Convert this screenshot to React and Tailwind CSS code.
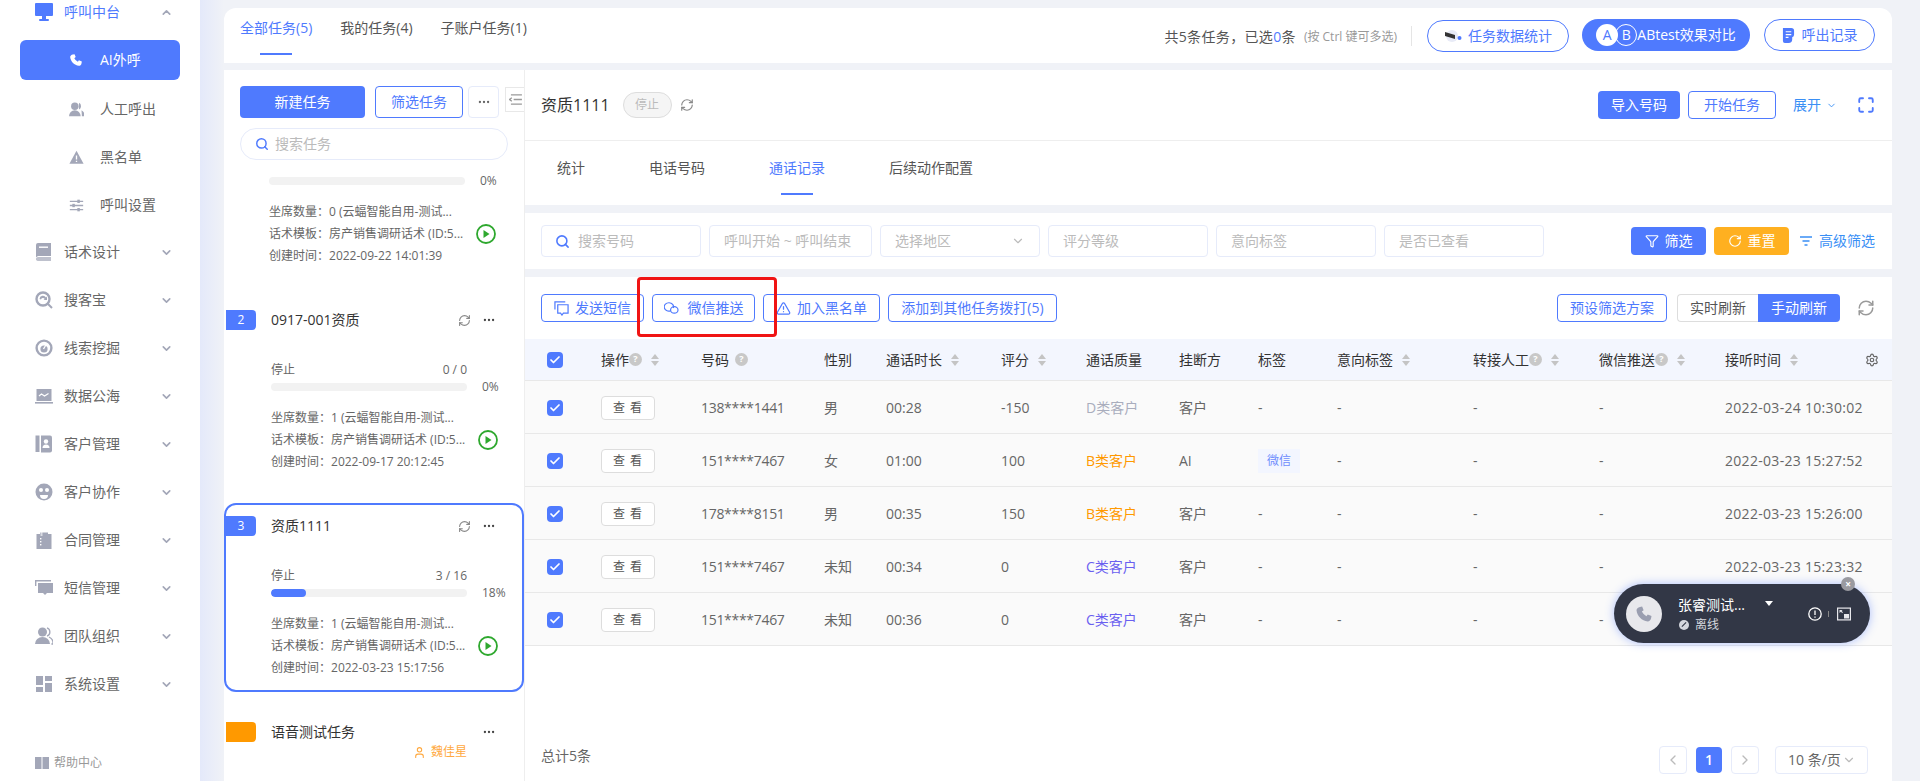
import { ChevronDown, ChevronUp, ChevronLeft, ChevronRight, Search, RefreshCw, Settings, TriangleAlert, Filter, RotateCw, User, Check, Maximize, Ellipsis } from "lucide-react";

const Svg = ({ children, className = "w-[18px] h-[18px]" }) => (
  <svg viewBox="0 0 18 18" fill="currentColor" className={className}>
    {children}
  </svg>
);

const navIcons = {
  book: (
    <Svg>
      <path d="M1 2a2 2 0 0 1 2-2h13v13H4a3 3 0 0 0-3 1.500z" />
      <path d="M1 15.500A2 2 0 0 1 3 14h13v4H3a2 2 0 0 1-2-2.500z" opacity=".7" />
      <rect x="4" y="3.500" width="9" height="1.400" fill="#fff" />
    </Svg>
  ),
  search: (
    <Svg>
      <circle cx="8" cy="8" r="6.500" fill="none" stroke="currentColor" strokeWidth="2.400" />
      <path d="M13 13l4 4" stroke="currentColor" strokeWidth="2" />
      <path d="M4.500 8a3.500 3.500 0 0 1 6.500-1.500l1-1v3.500H8.500l1.200-1.100A2 2 0 0 0 6 8.500z" />
    </Svg>
  ),
  target: (
    <Svg>
      <circle cx="9" cy="9" r="7.400" fill="none" stroke="currentColor" strokeWidth="2.400" />
      <circle cx="9" cy="10" r="3.600" />
      <path d="M8.500 10l3-5" stroke="#fff" strokeWidth="1.300" />
    </Svg>
  ),
  sea: (
    <Svg>
      <rect x="1.500" y="2" width="15" height="12" />
      <rect y="15" width="18" height="1.600" />
      <path d="M4 9l2.500-2 3 2 4-2.500" fill="none" stroke="#fff" strokeWidth="1.200" />
    </Svg>
  ),
  contacts: (
    <Svg>
      <rect x="0.500" y="0.500" width="4" height="16.500" />
      <path d="M6 .5h9a2 2 0 0 1 2 2v13a2 2 0 0 1-2 2H6z" />
      <circle cx="11" cy="6.500" r="2.200" fill="#fff" />
      <path d="M7.500 13a3.500 3.500 0 0 1 7 0z" fill="#fff" />
    </Svg>
  ),
  face: (
    <Svg>
      <circle cx="9" cy="9" r="8.500" />
      <circle cx="6" cy="7" r="2" fill="#fff" />
      <circle cx="12" cy="7" r="2" fill="#fff" />
      <path d="M5 12h8a4 4 0 0 1-8 0z" fill="#fff" />
    </Svg>
  ),
  clip: (
    <Svg>
      <path d="M1.500 3H5V1.500h8V3h3.500v15h-15z" />
      <rect x="5.500" y="0" width="2" height="5" fill="#fff" opacity=".6" />
      <rect x="5" y="7" width="1.400" height="1.400" fill="#fff" />
      <rect x="5" y="10" width="1.400" height="1.400" fill="#fff" />
      <rect x="5" y="13" width="1.400" height="1.400" fill="#fff" />
    </Svg>
  ),
  sms: (
    <Svg>
      <path d="M0 1h16v1.400H1.400V7H0z" />
      <path d="M3 4h15v10h-6l-2 2-2-2H3z" />
    </Svg>
  ),
  team: (
    <Svg>
      <circle cx="7.500" cy="5" r="4.500" />
      <path d="M0 17a7.500 7 0 0 1 15 0z" />
      <path d="M12 .8a4.500 4.500 0 0 1 0 8.400M14 10a7 7 0 0 1 4 7h-1.600" fill="none" stroke="currentColor" strokeWidth="1.300" />
    </Svg>
  ),
  grid: (
    <Svg>
      <rect x="1" y="1" width="7" height="9" />
      <rect x="10" y="1" width="7" height="5" />
      <rect x="10" y="8" width="7" height="9" />
      <rect x="1" y="12" width="7" height="5" />
    </Svg>
  ),
};

const navItems = [
  ["话术设计", "book"],
  ["搜客宝", "search"],
  ["线索挖掘", "target"],
  ["数据公海", "sea"],
  ["客户管理", "contacts"],
  ["客户协作", "face"],
  ["合同管理", "clip"],
  ["短信管理", "sms"],
  ["团队组织", "team"],
  ["系统设置", "grid"],
];

const subItems = [
  [
    "人工呼出",
    <Svg key="a" className="w-[15px] h-[15px]">
      <circle cx="7" cy="5" r="4.500" />
      <path d="M0 17a7 7 0 0 1 14 0z" />
      <path d="M12 1a4.500 4.500 0 0 1 0 8M15 10a6 6 0 0 1 3 7h-2.500" />
    </Svg>,
  ],
  [
    "黑名单",
    <Svg key="b" className="w-[15px] h-[15px]">
      <path d="M9 1l8.500 15.500H.5z" />
      <path d="M9 6.500v5M9 12.800v1.500" stroke="#fff" strokeWidth="1.600" />
    </Svg>,
  ],
  [
    "呼叫设置",
    <Svg key="c" className="w-[15px] h-[15px]">
      <path d="M1 4h16M1 9h16M1 14h16" stroke="currentColor" strokeWidth="1.600" />
      <rect x="10" y="2" width="3" height="4" />
      <rect x="4" y="7" width="3" height="4" />
      <rect x="10" y="12" width="3" height="4" />
    </Svg>,
  ],
];

const Sidebar = () => (
  <div className="w-[224px] shrink-0 flex">
    <div className="w-[200px] bg-white flex flex-col text-sm text-[#666]">
      <div className="h-6 flex items-center pl-[35px] text-[#4f7afe]">
        <svg viewBox="0 0 18 18" fill="currentColor" className="w-[18px] h-[18px]">
          <rect y="0" width="18" height="13" rx="1" />
          <rect x="7" y="13" width="4" height="3" />
          <rect x="4" y="16" width="10" height="2" rx="1" />
        </svg>
        <span className="ml-[11px]">呼叫中台</span>
        <ChevronUp className="w-[13px] h-[13px] ml-[40px] text-[#a3a7b8]" strokeWidth={3} />
      </div>
      <div className="mt-4 mx-5 h-10 rounded-md bg-[#4f7afe] text-white flex items-center pl-[49px]">
        <svg viewBox="0 0 24 24" fill="currentColor" className="w-[14px] h-[14px]">
          <path d="M6.600 2.500 9.500 2l2 5-2.400 1.800a13 13 0 0 0 6.100 6.100l1.800-2.400 5 2-.5 2.900C21 20.500 19 22 17 22 9 21 3 15 2 7c0-2 2-4 4.600-4.500z" />
        </svg>
        <span className="ml-[17px]">AI外呼</span>
      </div>
      <div className="mt-[5px] h-[143px] flex flex-col">
        {subItems.map(([label, icon]) => (
          <div key={label} className="h-12 shrink-0 flex items-center pl-[69px]">
            <span className="w-[15px] flex text-[#a3a7b8]">{icon}</span>
            <span className="ml-[16px]">{label}</span>
          </div>
        ))}
      </div>
      {navItems.map(([label, icon]) => (
        <div key={label} className="h-12 shrink-0 flex items-center pl-[35px]">
          <span className="w-[18px] flex text-[#a3a7b8]">{navIcons[icon]}</span>
          <span className="ml-[11px] w-[56px] whitespace-nowrap">{label}</span>
          <ChevronDown className="w-[13px] h-[13px] ml-[40px] text-[#a3a7b8]" strokeWidth={3} />
        </div>
      ))}
      <div className="mt-auto mb-2 h-5 flex items-center pl-[35px] text-xs text-[#999]">
        <svg viewBox="0 0 14 14" fill="#a3a7b8" className="w-[14px] h-[14px]">
          <path d="M0 1h6.500v12H0zM7.500 1H14v12H7.500z" />
        </svg>
        <span className="ml-[5px]">帮助中心</span>
      </div>
    </div>
    <div className="w-6 bg-gradient-to-r from-[#e4e9fa] to-[#f0f2f7]" />
  </div>
);

const TopTab = ({ label, active }) => (
  <div className={`flex flex-col items-center pt-[10px] ${active ? "text-[#4f7afe]" : "text-[#555]"}`}>
    <span className="leading-5 text-sm whitespace-nowrap">{label}</span>
    {active && <span className="mt-[15px] w-8 h-[2px] bg-[#4f7afe]" />}
  </div>
);

const TopBar = () => (
  <div className="h-[55px] shrink-0 mb-[7px] bg-white rounded-t-xl flex pl-4 pr-[17px]">
    <div className="flex gap-7">
      <TopTab label="全部任务(5)" active />
      <TopTab label="我的任务(4)" />
      <TopTab label="子账户任务(1)" />
    </div>
    <div className="ml-auto flex items-start pt-[11px]">
      <div className="h-8 mt-[2px] flex items-center text-sm text-[#555] whitespace-nowrap">
        <span className="tracking-[0.35px]">
          共5条任务，已选<span className="text-[#4f7afe]">0</span>条
        </span>
        <span className="ml-2 text-xs text-[#999]">(按 Ctrl 键可多选)</span>
      </div>
      <span className="ml-[14px] mt-[7px] h-[20px] w-px bg-[#e5e5e5]" />
      <button className="ml-[15px] mt-px h-8 w-[142px] rounded-full border border-[#4f7afe] flex items-center justify-center text-sm text-[#4f7afe]">
        <svg viewBox="0 0 18 12" className="w-[18px] h-[12px] mr-[6px]">
          <circle cx="8" cy="6" r="6" fill="#e8ebf7" />
          <path d="M1 2l10 3v4L1 6z" fill="#333" />
          <circle cx="15.500" cy="8" r="2" fill="#4f7afe" />
        </svg>
        任务数据统计
      </button>
      <button className="ml-[13px] h-8 w-[168px] rounded-full bg-[#4f7afe] flex items-center justify-center text-sm text-white">
        <span className="w-[22px] h-[22px] rounded-full bg-white text-[#4f7afe] flex items-center justify-center">A</span>
        <span className="w-[22px] h-[22px] -ml-[3px] rounded-full border border-white flex items-center justify-center">B</span>
        <span className="whitespace-nowrap">ABtest效果对比</span>
      </button>
      <button className="ml-[14px] h-8 w-[111px] rounded-full border border-[#4f7afe] flex items-center justify-center text-sm text-[#4f7afe]">
        <svg viewBox="0 0 14 16" fill="currentColor" className="w-[13px] h-[15px] mr-[7px]">
          <path d="M1 0h9a3 3 0 0 1 3 3v4a3 3 0 0 1-2 3v2a4 4 0 0 1-4 4H3a2 2 0 0 1-2-2z" />
          <path d="M4 4h6M4 7h6M4 10h3" stroke="#fff" strokeWidth="1.200" />
        </svg>
        呼出记录
      </button>
    </div>
  </div>
);

const PlayIcon = () => (
  <svg viewBox="0 0 20 20" className="w-5 h-5 shrink-0 ml-[10px]">
    <circle cx="10" cy="10" r="9" fill="none" stroke="#2ea82e" strokeWidth="1.800" />
    <path d="M7.500 6l6 4-6 4z" fill="#2ea82e" />
  </svg>
);

const InfoLines = ({ seats, date }) => (
  <div className="mt-4 flex items-center pl-[45px]">
    <div className="w-[197px] text-xs leading-[22px] text-[#666] whitespace-nowrap">
      <div>坐席数量：{seats} (云蝠智能自用-测试...</div>
      <div>话术模板：房产销售调研话术 (ID:5...</div>
      <div>创建时间：{date}</div>
    </div>
    <PlayIcon />
  </div>
);

const Bar = ({ percent, pct }) => (
  <div className="h-2 flex items-center pl-[45px] text-xs text-[#666]">
    <div className="w-[196px] h-2 rounded-full bg-[#f2f2f2] overflow-hidden">
      <div className="h-full rounded-full bg-[#4f7afe]" style={{ width: `${percent}%` }} />
    </div>
    <span className="ml-[15px]">{pct}</span>
  </div>
);

const TaskCard = ({ num, title, count, pct, percent, seats, date, active, height }) => (
  <div className={`border-2 pt-[11px] rounded-xl ${active ? "border-[#4f7afe]" : "border-transparent"} ${height}`}>
    <div className="flex items-center h-5 pr-[26px]">
      <span className="w-[30px] h-5 rounded-r-sm bg-[#4f7afe] text-white text-xs flex items-center justify-center">{num}</span>
      <span className="ml-[15px] text-sm text-[#333]">{title}</span>
      <RefreshCw className="ml-auto w-[13px] h-[13px] text-[#888]" />
      <Ellipsis className="ml-[11px] w-[14px] h-[14px] text-[#444]" />
    </div>
    <div className="mt-[30px] h-5 w-[241px] pl-[45px] flex items-center justify-between text-xs text-[#666]">
      <span>停止</span>
      <span>{count}</span>
    </div>
    <div className="mt-[3px]">
      <Bar percent={percent} pct={pct} />
    </div>
    <InfoLines seats={seats} date={date} />
  </div>
);

const LeftPanel = () => (
  <div className="w-[300px] shrink-0 bg-white overflow-hidden">
    <div className="relative pt-4 pl-4 pr-4">
      <div className="flex h-8">
        <button className="w-[125px] rounded bg-[#4f7afe] text-white text-sm">新建任务</button>
        <button className="ml-[10px] w-[88px] rounded border border-[#4f7afe] text-[#4f7afe] text-sm">筛选任务</button>
        <button className="ml-[5px] w-[31px] rounded border border-[#e6ebfa] flex items-center justify-center text-[#666]">
          <Ellipsis className="w-[14px] h-[14px]" />
        </button>
      </div>
      <span className="absolute right-0 top-[17px] w-[19px] h-[25px] border border-r-0 border-[#e8e8e8] bg-white flex items-center justify-center">
        <svg viewBox="0 0 14 12" className="w-[13px] h-[11px]" fill="none" stroke="#999" strokeWidth="1.400">
          <path d="M2 1h12M5 6h9M2 11h12" />
          <path d="M3 4L0.500 6 3 8" />
        </svg>
      </span>
      <div className="mt-[10px] w-[268px] h-8 rounded-full border border-[#e6ebfa] flex items-center pl-[14px] text-sm text-[#bbb]">
        <Search className="w-[14px] h-[14px] text-[#4f7afe]" strokeWidth={2.5} />
        <span className="ml-[6px]">搜索任务</span>
      </div>
    </div>
    <div className="h-[137px] pt-[17px]">
      <Bar percent={0} pct="0%" />
      <InfoLines seats={0} date="2022-09-22 14:01:39" />
    </div>
    <div className="mb-[18px]">
      <TaskCard num={2} title="0917-001资质" count="0 / 0" pct="0%" percent={0} seats={1} date="2022-09-17 20:12:45" height="h-[188px]" />
    </div>
    <TaskCard num={3} title="资质1111" count="3 / 16" pct="18%" percent={18} seats={1} date="2022-03-23 15:17:56" active height="h-[189px]" />
    <div className="pt-[30px] pl-[2px]">
      <div className="flex items-center h-5 pr-[28px]">
        <span className="w-[30px] h-5 rounded-r-sm bg-[#ff9900]" />
        <span className="ml-[15px] text-sm text-[#333]">语音测试任务</span>
        <Ellipsis className="ml-auto w-[14px] h-[14px] text-[#444]" />
      </div>
      <div className="mt-[2px] pl-[187px] flex items-center text-xs text-[#ffa940]">
        <User className="w-[13px] h-[13px]" />
        <span className="ml-[5px]">魏佳星</span>
      </div>
    </div>
  </div>
);

const Field = ({ label, width = "w-[160px]", icon, chevron }) => (
  <div className={`${width} h-8 rounded border border-[#e6ebfa] flex items-center px-[14px] text-sm text-[#bbb] whitespace-nowrap`}>
    {icon}
    <span>{label}</span>
    {chevron && <ChevronDown className="ml-auto w-[14px] h-[14px] text-[#bbb]" />}
  </div>
);

const rowGrid =
  "grid grid-cols-[54px_100px_123px_62px_115px_85px_93px_79px_79px_136px_126px_126px_1fr] items-center pl-[22px]";

const Sort = () => (
  <span className="inline-flex flex-col gap-[2px] ml-[9px] align-middle">
    <span className="w-0 h-0 border-x-[4px] border-x-transparent border-b-[5px] border-b-[#c4c4c4]" />
    <span className="w-0 h-0 border-x-[4px] border-x-transparent border-t-[5px] border-t-[#c4c4c4]" />
  </span>
);

const Help = ({ className = "" }) => (
  <span className={`w-[13px] h-[13px] rounded-full bg-[#c8c8c8] text-white text-[9px] font-bold inline-flex items-center justify-center ${className}`}>?</span>
);

const Box = () => (
  <span className="w-4 h-4 rounded-sm bg-[#4f7afe] flex items-center justify-center">
    <Check className="w-3 h-3 text-white" strokeWidth={3.5} />
  </span>
);

const headers = [
  { label: "操作", help: true, sort: true },
  { label: "号码", help: true, gap: true },
  { label: "性别" },
  { label: "通话时长", sort: true },
  { label: "评分", sort: true },
  { label: "通话质量" },
  { label: "挂断方" },
  { label: "标签" },
  { label: "意向标签", sort: true },
  { label: "转接人工", help: true, sort: true },
  { label: "微信推送", help: true, sort: true },
  { label: "接听时间", sort: true },
];

const rows = [
  ["138****1441", "男", "00:28", "-150", "D类客户", "text-[#a9adbd]", "客户", false, "2022-03-24 10:30:02"],
  ["151****7467", "女", "01:00", "100", "B类客户", "text-[#ff9900]", "AI", true, "2022-03-23 15:27:52"],
  ["178****8151", "男", "00:35", "150", "B类客户", "text-[#ff9900]", "客户", false, "2022-03-23 15:26:00"],
  ["151****7467", "未知", "00:34", "0", "C类客户", "text-[#6a5ff0]", "客户", false, "2022-03-23 15:23:32"],
  ["151****7467", "未知", "00:36", "0", "C类客户", "text-[#6a5ff0]", "客户", false, ""],
];

const OutlineBtn = ({ width, icon, children }) => (
  <button className={`${width} h-7 rounded border border-[#4f7afe] flex items-center justify-center text-sm text-[#4f7afe] whitespace-nowrap`}>
    {icon}
    {children}
  </button>
);

const Table = () => (
  <div className="relative flex-1 bg-white flex flex-col">
    <div className="relative h-[62px] shrink-0 pt-[17px] pl-4 pr-[17px] flex items-start">
      <div className="flex gap-2">
        <OutlineBtn
          width="w-[103px]"
          icon={
            <svg viewBox="0 0 16 16" fill="none" stroke="currentColor" strokeWidth="1.300" className="w-[15px] h-[15px] mr-[6px]">
              <path d="M1 9V1h11" />
              <path d="M4 4h11v9H10l-1.500 2L7 13H4z" />
            </svg>
          }
        >
          发送短信
        </OutlineBtn>
        <OutlineBtn
          width="w-[103px]"
          icon={
            <svg viewBox="0 0 16 14" fill="none" stroke="currentColor" strokeWidth="1.300" className="w-[15px] h-[13px] mr-[9px]">
              <path d="M7 9.500a5 4.500 0 1 1 3-3" />
              <ellipse cx="11" cy="8.500" rx="4" ry="3.500" />
            </svg>
          }
        >
          微信推送
        </OutlineBtn>
        <OutlineBtn width="w-[117px]" icon={<TriangleAlert className="w-[15px] h-[15px] mr-[6px]" />}>
          加入黑名单
        </OutlineBtn>
        <OutlineBtn width="w-[169px]">添加到其他任务拨打(5)</OutlineBtn>
      </div>
      <div className="ml-auto flex items-center h-7">
        <OutlineBtn width="w-[110px]">预设筛选方案</OutlineBtn>
        <div className="ml-[10px] flex h-7 text-sm">
          <span className="w-[81px] rounded-l border border-r-0 border-[#ddd] text-[#555] flex items-center justify-center">实时刷新</span>
          <span className="w-[82px] rounded-r bg-[#4f7afe] text-white flex items-center justify-center">手动刷新</span>
        </div>
        <RefreshCw className="ml-[17px] w-[18px] h-[18px] text-[#9a9a9a]" />
      </div>
      <span className="absolute left-[112px] top-0 w-[140px] h-[60px] border-[3px] border-[#f01414] rounded-[4px]" />
    </div>

    <div className={`relative ${rowGrid} h-[42px] bg-[#f3f6fe] border-b border-[#e8e8e8] text-sm text-[#333]`}>
      <Box />
      {headers.map((h) => (
        <div key={h.label} className="flex items-center whitespace-nowrap">
          {h.label}
          {h.help && <Help className={h.gap ? "ml-[6px]" : ""} />}
          {h.sort && <Sort />}
        </div>
      ))}
      <Settings className="absolute right-[13px] top-[14px] w-[14px] h-[14px] text-[#666]" />
    </div>

    {rows.map((r, i) => (
      <div key={i} className={`${rowGrid} h-[53px] pt-px bg-[#fafafa] border-b border-[#e8e8e8] text-sm text-[#666]`}>
        <Box />
        <div>
          <button className="w-[54px] h-6 rounded-sm border border-[#ddd] bg-white text-xs tracking-[1px] text-[#555]">查 看</button>
        </div>
        <div className="tracking-[-0.3px]">{r[0]}</div>
        <div>{r[1]}</div>
        <div>{r[2]}</div>
        <div>{r[3]}</div>
        <div className={r[5]}>{r[4]}</div>
        <div>{r[6]}</div>
        <div>
          {r[7] ? (
            <span className="w-[42px] h-6 bg-[#f3f6ff] text-xs text-[#6f8dfd] flex items-center justify-center">微信</span>
          ) : (
            "-"
          )}
        </div>
        <div>-</div>
        <div>-</div>
        <div>-</div>
        <div className="tracking-[0.3px]">{r[8]}</div>
      </div>
    ))}

    <div className="flex-1 flex items-start pt-[100px] pl-4 pr-6">
      <span className="h-5 text-sm leading-5 text-[#666]">总计5条</span>
      <div className="ml-auto flex items-center text-[#bbb]">
        <span className="w-7 h-7 rounded border border-[#e6ebfa] flex items-center justify-center">
          <ChevronLeft className="w-4 h-4" />
        </span>
        <span className="ml-[9px] w-[26px] h-[26px] rounded bg-[#4f7afe] text-white text-sm font-semibold flex items-center justify-center">1</span>
        <span className="ml-[9px] w-7 h-7 rounded border border-[#e6ebfa] flex items-center justify-center">
          <ChevronRight className="w-4 h-4" />
        </span>
        <span className="ml-4 w-[93px] h-7 rounded border border-[#e6ebfa] flex items-center pl-3 text-sm text-[#666] whitespace-nowrap">
          10 条/页
          <ChevronDown className="ml-px w-[14px] h-[14px] text-[#bbb]" />
        </span>
      </div>
    </div>

    <div className="absolute left-[1089px] top-[307px] w-[256px] h-[59px] rounded-full bg-[#323746] shadow-[0_0_10px_rgba(79,122,254,0.45)] flex items-center pl-3 text-white">
      <span className="w-9 h-9 rounded-full bg-[#e8e8ec] flex items-center justify-center">
        <svg viewBox="0 0 24 24" fill="#9a9eb0" className="w-[18px] h-[18px]">
          <path d="M6.600 2.500 9.500 2l2 5-2.400 1.800a13 13 0 0 0 6.100 6.100l1.800-2.400 5 2-.5 2.900C21 20.500 19 22 17 22 9 21 3 15 2 7c0-2 2-4 4.600-4.500z" />
        </svg>
      </span>
      <div className="ml-[16px] w-[70px]">
        <div className="text-sm leading-5 whitespace-nowrap">张睿测试...</div>
        <div className="mt-[2px] flex items-center text-xs leading-4 text-[#d5d7de]">
          <span className="w-[10px] h-[10px] rounded-full bg-[#d5d7de] ml-[1px] mr-[6px] flex items-center justify-center">
            <span className="w-[6px] h-px bg-[#323746] -rotate-45" />
          </span>
          离线
        </div>
      </div>
      <span className="ml-[17px] -mt-[20px] w-0 h-0 border-x-[4px] border-x-transparent border-t-[5px] border-t-white" />
      <svg viewBox="0 0 14 14" fill="none" stroke="#fff" strokeWidth="1.300" className="ml-[35px] w-[14px] h-[14px]">
        <circle cx="7" cy="7" r="6.200" />
        <path d="M7 3.500v4.500M7 9.500v1.300" />
      </svg>
      <span className="ml-[6px] w-px h-[6px] bg-[#888]" />
      <svg viewBox="0 0 14 14" className="ml-[8px] w-[14px] h-[14px]">
        <rect x="0.600" y="1.100" width="12.800" height="11.800" fill="none" stroke="#e8e8ec" strokeWidth="1.200" />
        <rect x="7" y="7" width="5" height="4.500" fill="#e8e8ec" />
        <path d="M2.500 3h3L4.600 3.900 6 5.300l-.8.800-1.400-1.400-1.300 1.200z" fill="#e8e8ec" />
      </svg>
      <span className="absolute right-[15px] -top-[7px] w-[14px] h-[14px] rounded-full bg-[#9a9aa0] text-white text-[10px] font-bold flex items-center justify-center">×</span>
    </div>
  </div>
);

const Detail = () => (
  <div className="flex-1 min-w-0 border-l border-[#eee] flex flex-col">
    <div className="h-[71px] shrink-0 bg-white border-b border-[#eee] flex items-center pl-4 pr-[17px]">
      <span className="text-base text-[#333]">资质1111</span>
      <span className="ml-[13px] w-[49px] h-[26px] rounded-full border border-[#ddd] bg-[#f5f5f5] text-xs text-[#bbb] flex items-center justify-center">停止</span>
      <RefreshCw className="ml-[8px] w-[14px] h-[14px] text-[#888]" />
      <div className="ml-auto flex items-center">
        <button className="w-[82px] h-7 rounded-sm bg-[#4f7afe] text-white text-sm">导入号码</button>
        <button className="ml-2 w-[88px] h-7 rounded-sm border border-[#4f7afe] text-[#4f7afe] text-sm">开始任务</button>
        <span className="ml-[17px] text-sm text-[#3a8ff5]">展开</span>
        <ChevronDown className="ml-[5px] w-[11px] h-[11px] text-[#3a8ff5]" />
        <Maximize className="ml-[20px] w-[18px] h-[18px] text-[#4f7afe]" strokeWidth={2.5} />
      </div>
    </div>
    <div className="h-[64px] shrink-0 bg-white pl-8 flex gap-16 pt-[17px] text-sm text-[#555]">
      <span className="leading-5">统计</span>
      <span className="leading-5">电话号码</span>
      <div className="flex flex-col items-center text-[#4f7afe]">
        <span className="leading-5">通话记录</span>
        <span className="mt-[15px] w-8 h-[2px] bg-[#4f7afe]" />
      </div>
      <span className="leading-5">后续动作配置</span>
    </div>
    <div className="mt-2 h-[56px] shrink-0 bg-white flex items-start pt-3 pl-4 pr-[17px]">
      <div className="flex gap-2">
        <Field label="搜索号码" icon={<Search className="w-[15px] h-[15px] text-[#4f7afe] mr-[8px] -ml-[1px]" strokeWidth={2.5} />} />
        <Field label="呼叫开始 ~ 呼叫结束" width="w-[163px]" />
        <Field label="选择地区" chevron />
        <Field label="评分等级" />
        <Field label="意向标签" />
        <Field label="是否已查看" />
      </div>
      <div className="ml-auto flex items-center h-8 whitespace-nowrap">
        <button className="w-[75px] h-7 rounded-sm bg-[#4f7afe] text-white text-sm flex items-center justify-center">
          <Filter className="w-[14px] h-[14px] mr-[6px]" />
          筛选
        </button>
        <button className="ml-2 w-[75px] h-7 rounded-sm bg-[#ffb020] text-white text-sm flex items-center justify-center">
          <RotateCw className="w-[14px] h-[14px] mr-[6px]" />
          重置
        </button>
        <svg viewBox="0 0 12 10" fill="none" stroke="#3a8ff5" strokeWidth="1.300" className="ml-[11px] w-[12px] h-[10px]">
          <path d="M0 1h12M2.500 5h7M4.500 9h3" />
        </svg>
        <span className="ml-[7px] text-sm text-[#3a8ff5]">高级筛选</span>
      </div>
    </div>
    <div className="h-2 shrink-0" />
    <Table />
  </div>
);

export default function App() {
  return (
    <div className="w-screen h-screen overflow-hidden flex bg-[#f0f2f7] [font-family:'Open_Sans','Noto_Sans_CJK_SC',sans-serif]">
      <Sidebar />
      <div className="flex-1 min-w-0 flex flex-col pt-2 pr-7">
        <TopBar />
        <div className="flex-1 min-h-0 flex">
          <LeftPanel />
          <Detail />
        </div>
      </div>
    </div>
  );
}
